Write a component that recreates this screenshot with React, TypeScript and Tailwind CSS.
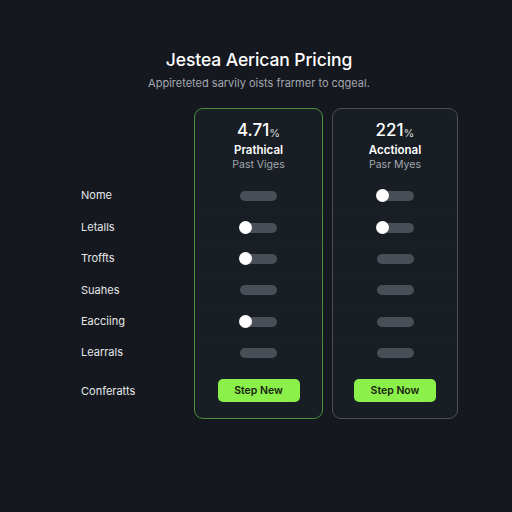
const rows = ['Nome', 'Letalls', 'Troffts', 'Suahes', 'Eacciing', 'Learrals'];

const plans = [
  {
    value: '4.71',
    name: 'Prathical',
    sub: 'Past Viges',
    cta: 'Step New',
    toggles: [false, true, true, false, true, false],
    active: true,
  },
  {
    value: '221',
    name: 'Acctional',
    sub: 'Pasr Myes',
    cta: 'Step Now',
    toggles: [true, true, false, false, false, false],
    active: false,
  },
];

function Toggle({ on }: { on: boolean }) {
  return (
    <div className="relative h-[10px] w-[37px] rounded-full bg-[#4a4f57]">
      {on && <div className="absolute -left-[1px] -top-[1.5px] h-[13px] w-[13px] rounded-full bg-white" />}
    </div>
  );
}

export default function App() {
  return (
    <div
      className="h-[512px] w-[512px] overflow-hidden bg-[#15181e] text-white"
      style={{ fontFamily: 'Inter, "Liberation Sans", sans-serif' }}
    >
      {/* Heading */}
      <div className="flex flex-col items-center pt-[49px] pl-[6px]">
        <h1 className="text-[17.5px] font-medium leading-[22px] tracking-[-0.1px]">Jestea Aerican Pricing</h1>
        <p className="mt-[5px] text-[11px] leading-[14px] text-[#a3a7ae]">
          Appireteted sarvily oists frarmer to cqgeal.
        </p>
      </div>

      {/* Comparison table */}
      <div className="mt-[18px] flex pl-[81px]">
        {/* Feature labels */}
        <div className="flex w-[113px] flex-col pt-[72px]">
          {rows.map((r) => (
            <div key={r} className="flex h-[31.4px] items-center text-[11px] text-[#e6e8eb]">
              {r}
            </div>
          ))}
          <div className="mt-[11px] flex h-[23px] items-center text-[11px] text-[#e6e8eb]">Conferatts</div>
        </div>

        {/* Plan cards */}
        <div className="flex gap-[9px]">
          {plans.map((p) => (
            <div
              key={p.name}
              className={`flex h-[311px] flex-col items-center rounded-[9px] border bg-[#191e25] ${
                p.active ? 'w-[129px] border-[#4c8f37]' : 'w-[126px] border-[#4a4f57]'
              }`}
            >
              <div className="flex h-[71px] flex-col items-center pt-[10px]">
                <div className="flex items-start leading-[22px]">
                  <span className="text-[17px] font-medium">{p.value}</span>
                  <span className="mt-[3px] text-[11px] text-[#d6d8dc]">%</span>
                </div>
                <div className="mt-[-1px] text-[11.5px] font-semibold leading-[14px]">{p.name}</div>
                <div className="mt-[1px] text-[10.5px] leading-[13px] text-[#a3a7ae]">{p.sub}</div>
              </div>
              <div className="flex w-full flex-col">
                {p.toggles.map((t, i) => (
                  <div
                    key={i}
                    className={`flex h-[31.4px] items-center justify-center ${i > 0 ? 'border-t border-[#1d222a]' : ''}`}
                  >
                    <Toggle on={t} />
                  </div>
                ))}
              </div>
              <button className="mt-[11px] h-[23px] w-[82px] rounded-[5px] bg-[#8cf04a] text-[10.5px] font-semibold text-[#17210f]">
                {p.cta}
              </button>
            </div>
          ))}
        </div>
      </div>
    </div>
  );
}
